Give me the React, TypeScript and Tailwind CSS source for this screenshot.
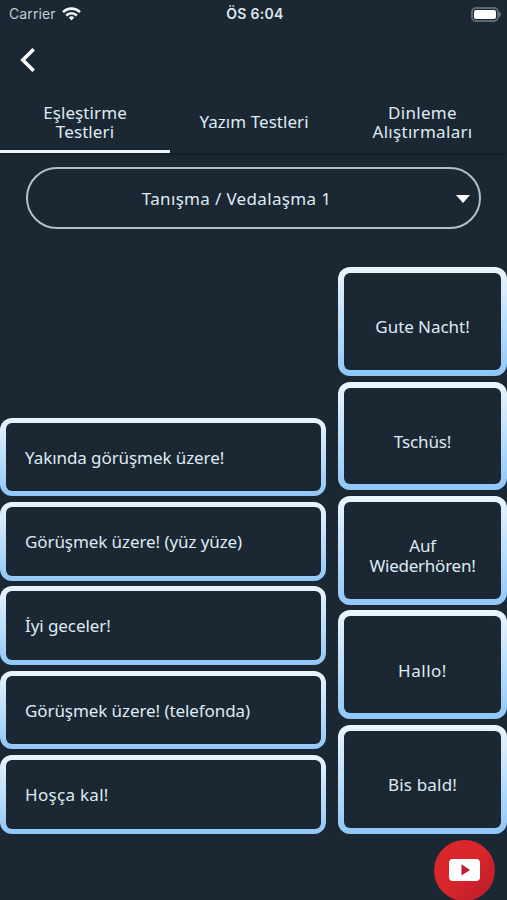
import { useState } from 'react'

const tabs = [
  { lines: ['Eşleştirme', 'Testleri'], tracking: 'tracking-[0.1px]' },
  { lines: ['Yazım Testleri'], tracking: 'tracking-[0.05px]' },
  { lines: ['Dinleme', 'Alıştırmaları'], tracking: 'tracking-[0.3px]' },
]

const meanings = [
  { text: 'Yakında görüşmek üzere!', tracking: 'tracking-[-0.08px]' },
  { text: 'Görüşmek üzere! (yüz yüze)', tracking: 'tracking-[-0.08px]' },
  { text: 'İyi geceler!', tracking: 'tracking-[-0.08px]' },
  { text: 'Görüşmek üzere! (telefonda)', tracking: 'tracking-[-0.08px]' },
  { text: 'Hoşça kal!', tracking: 'tracking-[0.3px]' },
]

const words = [
  { lines: ['Gute Nacht!'], tracking: 'tracking-[-0.05px]' },
  { lines: ['Tschüs!'], tracking: 'tracking-[-0.15px]' },
  { lines: ['Auf', 'Wiederhören!'], tracking: 'tracking-[-0.25px]' },
  { lines: ['Hallo!'], tracking: 'tracking-[0.5px]' },
  { lines: ['Bis bald!'], tracking: 'tracking-[0.2px]' },
]

const StatusBar = () => (
  <div className="flex h-7 items-center justify-between pl-[9px] pr-[6px] font-['Inter',sans-serif] text-[14px] leading-none">
    <div className="flex w-40 items-center gap-[6px] text-[#c3cdd5]">
      <span className="tracking-[0.1px]">Carrier</span>
      <svg width="19" height="14" viewBox="0 0 19 14" fill="none" stroke="#f4f8fa" strokeWidth="2.6">
        <path d="M1 5.2a12 12 0 0 1 17 0" />
        <path d="M4.2 8.5a7.5 7.5 0 0 1 10.6 0" />
        <path d="M6.8 10.6a3.8 3.8 0 0 1 5.4 0L9.5 13.6z" fill="#f4f8fa" stroke="none" />
      </svg>
    </div>
    <span className="font-semibold tracking-[0.3px] text-[#dfe7ec]">ÖS 6:04</span>
    <div className="flex w-40 items-center justify-end">
      <div className="h-[15px] w-[28px] rounded-[5px] border-2 border-[#5d6872] p-px">
        <div className="h-full w-full rounded-[2px] bg-white" />
      </div>
      <div className="h-[5px] w-[2px] rounded-r-full bg-[#5d6872]" />
    </div>
  </div>
)

const App = () => {
  const [activeTab, setActiveTab] = useState(0)

  return (
    <div className="flex h-[900px] w-full flex-col overflow-hidden bg-[#1b2733] font-['Noto_Sans',sans-serif] text-[17px] leading-[19.5px] text-[#dfebf3]">
      <header className="h-[153px] shrink-0 shadow-[0_1px_3px_#101a25]">
        <StatusBar />
        <div className="flex h-[64px] items-center pl-[20px]">
          <button aria-label="Geri">
            <svg width="16" height="26" viewBox="0 0 16 26" fill="none" stroke="#ffffff" strokeWidth="3.6">
              <path d="M13.7 2.2 2.8 13l10.9 10.8" />
            </svg>
          </button>
        </div>
        <nav className="grid h-[61px] grid-cols-[170px_168px_169px]">
          {tabs.map((tab, i) => (
            <button
              key={tab.lines[0]}
              onClick={() => setActiveTab(i)}
              className={`flex flex-col items-center justify-center border-b-3 pt-[2px] ${tab.tracking} ${
                activeTab === i ? 'border-[#edf3f7]' : 'border-transparent'
              }`}
            >
              {tab.lines.map((line) => (
                <span key={line} className="block whitespace-nowrap">
                  {line}
                </span>
              ))}
            </button>
          ))}
        </nav>
      </header>

      <button className="mx-[26px] mt-[14px] flex h-[62px] shrink-0 items-center rounded-full border-2 border-[#b4c0c9] pr-[9px] pl-[9px]">
        <span className="flex-1 pr-[20px] pt-px tracking-[0.34px]">Tanışma / Vedalaşma 1</span>
        <svg width="14" height="8" viewBox="0 0 14 8" fill="#ffffff" className="mt-[2px]">
          <path d="M0 0h14L7 8z" />
        </svg>
      </button>

      <main className="flex h-[604.5px] shrink-0 items-end justify-between">
        <div className="flex w-[326px] flex-col gap-[5.8px]">
          {meanings.map(({ text, tracking }) => (
            <div
              key={text}
              className="h-[78.5px] rounded-[12px] bg-linear-to-b from-[#eaf5fd] to-[#8fc7f8] p-[5px] pl-[6px]"
            >
              <div className="flex h-full items-center rounded-[6px] bg-[#1b2733] pt-px pl-[19px]">
                <span className={`whitespace-nowrap ${tracking}`}>{text}</span>
              </div>
            </div>
          ))}
        </div>
        <div className="flex w-[169px] flex-col gap-[5.7px]">
          {words.map(({ lines, tracking }) => (
            <div
              key={lines[0]}
              className="h-[108.7px] rounded-[12px] bg-linear-to-b from-[#eaf5fd] to-[#8fc7f8] p-[6px]"
            >
              <div
                className={`flex h-full flex-col items-center justify-center rounded-[6px] bg-[#1b2733] pt-[11px] ${tracking}`}
              >
                {lines.map((line) => (
                  <span key={line} className="whitespace-nowrap">
                    {line}
                  </span>
                ))}
              </div>
            </div>
          ))}
        </div>
      </main>

      <button
        aria-label="YouTube"
        className="mt-[6px] mr-[12px] flex size-[61px] shrink-0 items-center justify-center self-end rounded-full bg-linear-to-br from-[#d9262b] from-50% to-[#b51c2a]"
      >
        <svg width="31" height="22" viewBox="0 0 31 22">
          <rect width="31" height="22" rx="4" fill="#ffffff" />
          <path d="M12.5 5.2v11.4l8.5-5.7z" fill="#b81f30" />
        </svg>
      </button>
    </div>
  )
}

export default App
